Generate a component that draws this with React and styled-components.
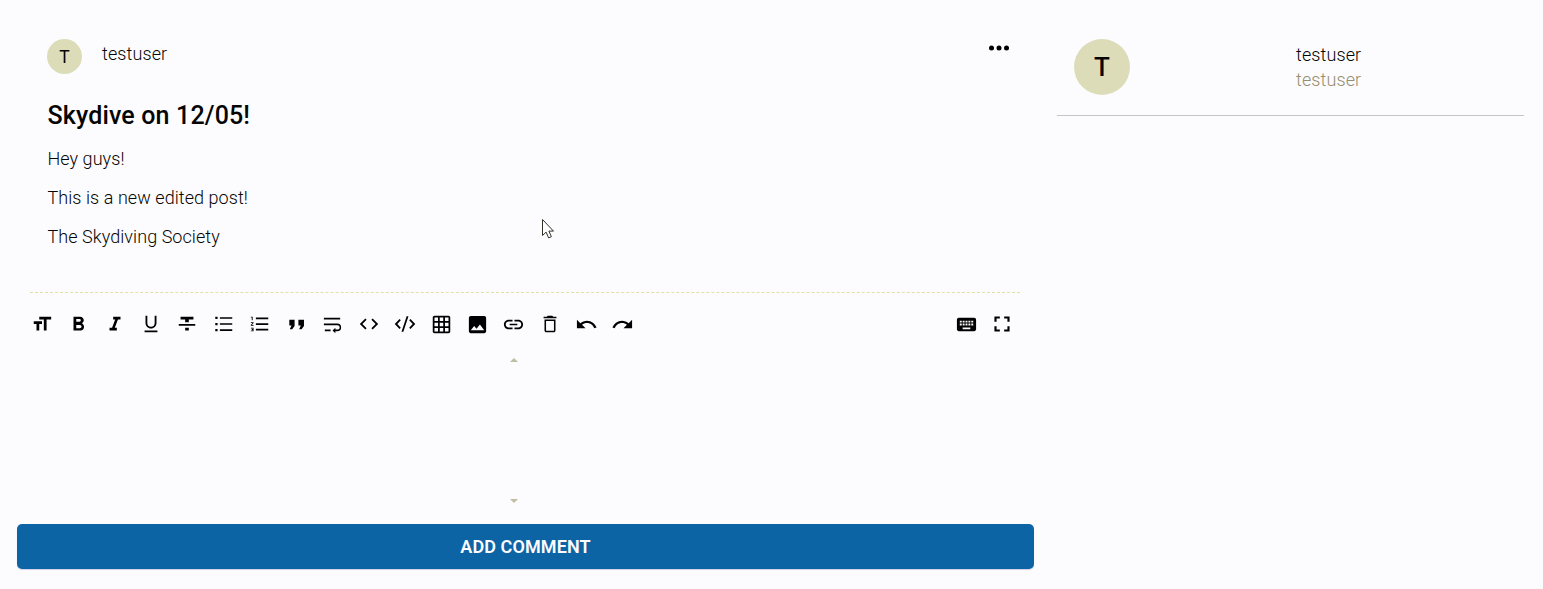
import React from "react";
import styled, { createGlobalStyle } from "styled-components";

const GlobalStyle = createGlobalStyle`
  * { box-sizing: border-box; }
  body {
    margin: 0;
    background: #fcfcff;
    color: #050503;
    font-family: Roboto, "Liberation Sans", sans-serif;
    overflow: hidden;
  }
`;

const Page = styled.div`
  display: flex;
  align-items: flex-start;
  height: 589px;
  padding: 0 19px 0 17px;
`;

const Main = styled.main`
  width: 1017px;
  height: 569px;
  display: flex;
  flex-direction: column;
`;

const Post = styled.article`
  margin: 0 14px 0 13px;
  height: 293px;
  padding: 39px 11px 0 17px;
  border-bottom: 1px dashed #e0e0a8;
`;

const PostHeader = styled.header`
  display: flex;
  align-items: flex-start;
  height: 61px;
`;

const Avatar = styled.div`
  display: flex;
  align-items: center;
  justify-content: center;
  flex: none;
  width: ${(p) => p.$size}px;
  height: ${(p) => p.$size}px;
  border-radius: 50%;
  background: #dcddb8;
  font-size: ${(p) => p.$font}px;
  font-weight: ${(p) => p.$weight};
`;

const UserName = styled.div`
  font-size: 18px;
  line-height: 25px;
  font-weight: 300;
  letter-spacing: 0.1px;
  color: ${(p) => (p.$muted ? "#958e70" : "#050503")};
`;

const PostAuthor = styled(UserName)`
  margin: 2px auto 0 20px;
`;

const MoreButton = styled.button`
  display: flex;
  padding: 0;
  margin: 6px 0 0;
  border: 0;
  background: none;
  color: #000;
`;

const Title = styled.h1`
  margin: 0 0 0 0.5px;
  font-size: 25px;
  line-height: 31px;
  font-weight: 500;
  letter-spacing: 0.15px;
`;

const Body = styled.div`
  margin: 14px 0 0 0.5px;
  font-size: 18px;
  font-weight: 300;
  line-height: 27px;
  letter-spacing: 0.06px;
`;

const Paragraph = styled.p`
  margin: 0 0 12px;
`;

const Toolbar = styled.div`
  display: flex;
  justify-content: space-between;
  height: 38px;
  margin-top: 12px;
  padding: 0 13.5px 0 7.2px;
`;

const ToolGroup = styled.div`
  display: flex;
`;

const Tool = styled.button`
  display: flex;
  align-items: center;
  justify-content: center;
  width: 36.25px;
  height: 38px;
  padding: 0;
  border: 0;
  background: none;
  color: #000;

  svg { flex: none; display: block; }
`;

const Editor = styled.div`
  flex: 1;
  display: flex;
  flex-direction: column;
  justify-content: space-between;
  padding: 15px 0 21px 493px;
`;

const ScrollArrow = styled.div`
  width: 0;
  height: 0;
  border: 4px solid transparent;
  border-top: ${(p) => (p.$up ? "0" : "4px solid #bfbea0")};
  border-bottom: ${(p) => (p.$up ? "4px solid #bfbea0" : "0")};
`;

const SubmitButton = styled.button`
  width: 100%;
  height: 45px;
  flex: none;
  border: 0;
  border-radius: 5px;
  padding: 0;
  background: #0c64a5;
  box-shadow: 0 1px 1px #d0d0e4;
  color: #fcfcff;
  font: 600 18px/45px Roboto, sans-serif;
  letter-spacing: 0.1px;
`;

const Sidebar = styled.aside`
  display: flex;
  margin-left: 23px;
  width: 467px;
  height: 116px;
  padding: 39px 0 0 17px;
  border-bottom: 1px solid #c4c4cc;
`;

const SideNames = styled.div`
  margin: 3px 0 0 166px;
`;

const Pointer = styled.svg`
  position: absolute;
  left: 541px;
  top: 218px;
`;

const tools = [
  ["Header", 22, "M9 4v3h5v12h3V7h5V4H9zm-6 8h3v7h3v-7h3V9H3v3z"],
  ["Bold", 22, "M15.6 10.8c1-.7 1.6-1.8 1.6-2.8 0-2.3-1.8-4-4-4H6v15h7.8c2.1 0 3.7-1.7 3.7-3.8 0-1.5-.8-2.8-1.9-3.4zM9 6.5h3.5a1.5 1.5 0 010 3H9zm4 10H9V13h4a1.7 1.7 0 010 3.5z"],
  ["Italic", 22, "M10 4v3h2.2l-3.4 9H6v3h8v-3h-2.2l3.4-9H18V4z"],
  ["Underline", 22, "M12 17c3.3 0 6-2.7 6-6V3h-2v8a4 4 0 01-8 0V3H6v8c0 3.3 2.7 6 6 6zm-7 2v2h14v-2z"],
  ["Strikethrough", 22, "M10 19h4v-3h-4v3zM5 4v3h5v3h4V7h5V4H5zM3 14h18v-2H3v2z"],
  ["Bulleted list", 22, "M2.5 4h2.5v2.5H2.5zm0 6.8h2.5v2.5H2.5zm0 6.7h2.5v2.5H2.5zM7.5 4.5H21v1.7H7.5zm0 6.7H21v1.7H7.5zm0 6.6H21v1.7H7.5z"],
  ["Numbered list", 22, "M2 17h2v.5H3v1h1v.5H2v1h3v-4H2v1zm1-9h1V4H2v1h1v3zm-1 3h1.8L2 13.1v.9h3v-1H3.2L5 10.9V10H2v1zm5.5-6v1.7H21V5H7.5zm0 14H21v-1.7H7.5V19zm0-6H21v-1.7H7.5V13z"],
  ["Quote", 23, "M4.5 7h5.500v6.500L7.500 17H5l1.800-4H4.500zM14 7h5.800v6.500L17.300 17h-2.500l1.700-4H14z"],
  ["Wrap", 23, "M4 19h6v-1.7H4V19zM20 5H3v1.7h17V5zm-3 6H3v1.7h14.2a2.3 2.3 0 010 4.6H15v-2l-3 2.85 3 2.85v-2h2a4 4 0 000-8z"],
  ["Inline code", 22, "M9.4 16.6L4.8 12l4.6-4.6L8 6l-6 6 6 6 1.4-1.4zm5.2 0l4.6-4.6-4.6-4.6L16 6l6 6-6 6-1.4-1.4z"],
  ["Code block", 22, "M7.4 16.1L3.6 12l3.8-4.1L6 6.5.8 12 6 17.5zm9.2 0l3.8-4.1-3.8-4.1L18 6.5l5.2 5.5-5.2 5.5zM13.8 3.5h2L10.2 20.5h-2z"],
  ["Table", 21, "M20 2H4c-1.1 0-2 .9-2 2v16c0 1.1.9 2 2 2h16c1.1 0 2-.9 2-2V4c0-1.1-.9-2-2-2zM8 20H4v-4h4v4zm0-6H4v-4h4v4zm0-6H4V4h4v4zm6 12h-4v-4h4v4zm0-6h-4v-4h4v4zm0-6h-4V4h4v4zm6 12h-4v-4h4v4zm0-6h-4v-4h4v4zm0-6h-4V4h4v4z"],
  ["Image", 23, "M21 19V5c0-1.1-.9-2-2-2H5c-1.1 0-2 .9-2 2v14c0 1.1.9 2 2 2h14c1.1 0 2-.9 2-2zM8.5 13.5l2.5 3.01L14.5 12l4.5 6H5l3.5-4.5z"],
  ["Link", 23, "M3.9 12c0-1.71 1.39-3.1 3.1-3.1h4V7H7c-2.76 0-5 2.24-5 5s2.24 5 5 5h4v-1.9H7c-1.71 0-3.1-1.39-3.1-3.1zM8 12.8h8v-1.6H8v1.6zm9-5.8h-4v1.9h4c1.71 0 3.1 1.39 3.1 3.1s-1.39 3.1-3.1 3.1h-4V17h4c2.76 0 5-2.24 5-5s-2.24-5-5-5z"],
  ["Clear", 22, "M6 19c0 1.1.9 2 2 2h8c1.1 0 2-.9 2-2V7H6v12zM7.7 8.7h8.6v10.6H7.7V8.7zM15.5 4l-1-1h-5l-1 1H5v1.7h14V4z"],
  ["Undo", 23, "M12.5 8c-2.65 0-5.05.99-6.9 2.6L2 7v9h9l-3.62-3.62c1.39-1.16 3.16-1.88 5.12-1.88 3.54 0 6.55 2.31 7.6 5.5l2.37-.78C21.08 11.03 17.15 8 12.5 8z"],
  ["Redo", 23, "M18.4 10.6C16.55 8.99 14.15 8 11.5 8c-4.65 0-8.58 3.03-9.96 7.22L3.9 16c1.05-3.19 4.05-5.5 7.6-5.5 1.95 0 3.73.72 5.12 1.88L13 16h9V7l-3.6 3.6z"],
];

const viewTools = [
  ["Keyboard", 23, "M20 5H4c-1.1 0-2 .9-2 2v10c0 1.1.9 2 2 2h16c1.1 0 2-.9 2-2V7c0-1.1-.9-2-2-2zm-9 3h2v2h-2V8zm0 3h2v2h-2v-2zM8 8h2v2H8V8zm0 3h2v2H8v-2zm-1 2H5v-2h2v2zm0-3H5V8h2v2zm9 7H8v-2h8v2zm0-4h-2v-2h2v2zm0-3h-2V8h2v2zm3 3h-2v-2h2v2zm0-3h-2V8h2v2z"],
  ["Fullscreen", 26, "M7 14H5v5h5v-2H7v-3zm-2-4h2V7h3V5H5v5zm12 7h-3v2h5v-5h-2v3zM14 5v2h3v3h2V5h-5z"],
];

function ToolButton({ tool: [label, size, path] }) {
  return (
    <Tool aria-label={label}>
      <svg viewBox="0 0 24 24" width={size} height={size} fill="currentColor">
        <path d={path} />
      </svg>
    </Tool>
  );
}

export default function App() {
  return (
    <>
      <GlobalStyle />
      <Page>
        <Main>
          <Post>
            <PostHeader>
              <Avatar $size={35} $font={17.5} $weight={400}>T</Avatar>
              <PostAuthor>testuser</PostAuthor>
              <MoreButton aria-label="More">
                <svg width="20" height="6" viewBox="0 0 20 6" fill="currentColor">
                  <circle cx="2.5" cy="3" r="2.5" />
                  <circle cx="10" cy="3" r="2.5" />
                  <circle cx="17.5" cy="3" r="2.5" />
                </svg>
              </MoreButton>
            </PostHeader>
            <Title>Skydive on 12/05!</Title>
            <Body>
              <Paragraph>Hey guys!</Paragraph>
              <Paragraph>This is a new edited post!</Paragraph>
              <Paragraph>The Skydiving Society</Paragraph>
            </Body>
          </Post>
          <Toolbar>
            <ToolGroup>
              {tools.map((t) => <ToolButton key={t[0]} tool={t} />)}
            </ToolGroup>
            <ToolGroup>
              {viewTools.map((t) => <ToolButton key={t[0]} tool={t} />)}
            </ToolGroup>
          </Toolbar>
          <Editor>
            <ScrollArrow $up />
            <ScrollArrow />
          </Editor>
          <SubmitButton>ADD COMMENT</SubmitButton>
        </Main>
        <Sidebar>
          <Avatar $size={56} $font={26} $weight={500}>T</Avatar>
          <SideNames>
            <UserName>testuser</UserName>
            <UserName $muted>testuser</UserName>
          </SideNames>
        </Sidebar>
      </Page>
      <Pointer width="14" height="22" viewBox="0 0 14 22">
        <path d="M1.5 1.5v16l3.6-3.4 2.5 5.8 2.8-1.2-2.5-5.6h4.6z" fill="#fff" stroke="#33332a" strokeWidth="1" />
      </Pointer>
    </>
  );
}
